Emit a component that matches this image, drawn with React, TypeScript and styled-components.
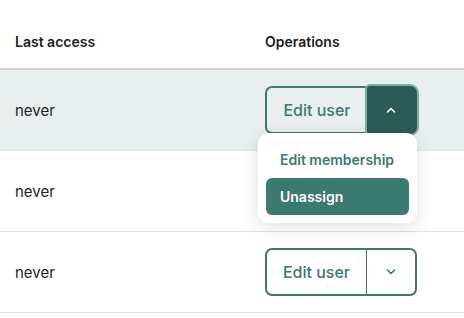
import React from "react";
import styled, { createGlobalStyle } from "styled-components";

const teal = "#3a7a70";
const tealDark = "#2a5c55";

const GlobalStyle = createGlobalStyle`
  body {
    margin: 0;
    background: #fff;
    font-family: Inter, "Noto Sans", sans-serif;
    color: #1d1d27;
  }
`;

const Table = styled.div`
  width: 464px;
`;

const HeaderRow = styled.div`
  display: grid;
  grid-template-columns: 250px 1fr;
  align-items: center;
  border-bottom: 2px solid #cfd1d1;
  padding-top: 14px;
  box-sizing: border-box;
  height: 70px;
`;

const HeadCell = styled.div`
  font-size: 14px;
  font-weight: 600;
  padding-left: 15px;
  color: #1d1d27;
`;

const Row = styled.div<{ $active?: boolean }>`
  position: relative;
  z-index: ${(p) => (p.$active ? 2 : 1)};
  display: grid;
  grid-template-columns: 250px 1fr;
  align-items: center;
  height: 81px;
  box-sizing: border-box;
  border-bottom: 1px solid #e2e4e4;
  background: ${(p) => (p.$active ? "#e9efef" : "#fff")};
`;

const Cell = styled.div`
  font-size: 15px;
  padding-left: 15px;
`;

const Split = styled.div`
  display: inline-flex;
  height: 48px;
  position: relative;
`;

const MainButton = styled.button<{ $open?: boolean }>`
  font-family: inherit;
  font-size: 16px;
  font-weight: 500;
  color: ${teal};
  background: transparent;
  border: 2px solid ${teal};
  border-right: ${(p) => (p.$open ? "none" : `1px solid ${teal}`)};
  border-radius: 7px 0 0 7px;
  width: 102px;
  padding: 0;
  height: 48px;
`;

const ToggleButton = styled.button<{ $open?: boolean }>`
  width: 50px;
  height: 48px;
  padding: 0;
  display: flex;
  align-items: center;
  justify-content: center;
  border: 2px solid ${(p) => (p.$open ? tealDark : teal)};
  border-left: none;
  border-radius: ${(p) => (p.$open ? "3px 7px 7px 3px" : "0 7px 7px 0")};
  background: ${(p) => (p.$open ? tealDark : "transparent")};
  color: ${(p) => (p.$open ? "#fff" : teal)};
  box-shadow: ${(p) => (p.$open ? "0 0 0 2px #80aba4" : "none")};
`;

const Menu = styled.div`
  position: absolute;
  top: 47px;
  left: -7px;
  width: 159px;
  box-sizing: border-box;
  background: #fff;
  border-radius: 11px;
  padding: 8px;
  box-shadow: 0 4px 18px rgba(30, 40, 40, 0.14);
  z-index: 5;
`;

const MenuItem = styled.div<{ $selected?: boolean }>`
  height: 37px;
  display: flex;
  align-items: center;
  padding-left: 14px;
  border-radius: 6px;
  font-size: 14px;
  font-weight: 600;
  color: ${(p) => (p.$selected ? "#fff" : teal)};
  background: ${(p) => (p.$selected ? teal : "transparent")};
`;

const Chevron: React.FC<{ up?: boolean }> = ({ up }) => (
  <svg width="10" height="6" viewBox="0 0 10 6" fill="none">
    <path
      d={up ? "M1.5 5 L5 1.5 L8.5 5" : "M1.5 1 L5 4.5 L8.5 1"}
      stroke="currentColor"
      strokeWidth="1.6"
      strokeLinecap="round"
      strokeLinejoin="round"
    />
  </svg>
);

type UserRow = { lastAccess: string; open?: boolean; covered?: boolean };

// the second row's buttons sit under the open menu
const rows: Array<UserRow> = [
  { lastAccess: "never", open: true },
  { lastAccess: "never", covered: true },
  { lastAccess: "never" },
];

const Operations: React.FC<{ open?: boolean }> = ({ open }) => (
  <Split>
    <MainButton $open={open}>Edit user</MainButton>
    <ToggleButton $open={open}>
      <Chevron up={open} />
    </ToggleButton>
    {open ? (
      <Menu>
        <MenuItem>Edit membership</MenuItem>
        <MenuItem $selected>Unassign</MenuItem>
      </Menu>
    ) : null}
  </Split>
);

const App: React.FC = () => (
  <>
    <GlobalStyle />
    <Table>
      <HeaderRow>
        <HeadCell>Last access</HeadCell>
        <HeadCell>Operations</HeadCell>
      </HeaderRow>
      {rows.map((r, idx) => (
        <Row key={idx} $active={r.open}>
          <Cell>{r.lastAccess}</Cell>
          <Cell>{r.covered ? null : <Operations open={r.open} />}</Cell>
        </Row>
      ))}
    </Table>
  </>
);

export default App;
